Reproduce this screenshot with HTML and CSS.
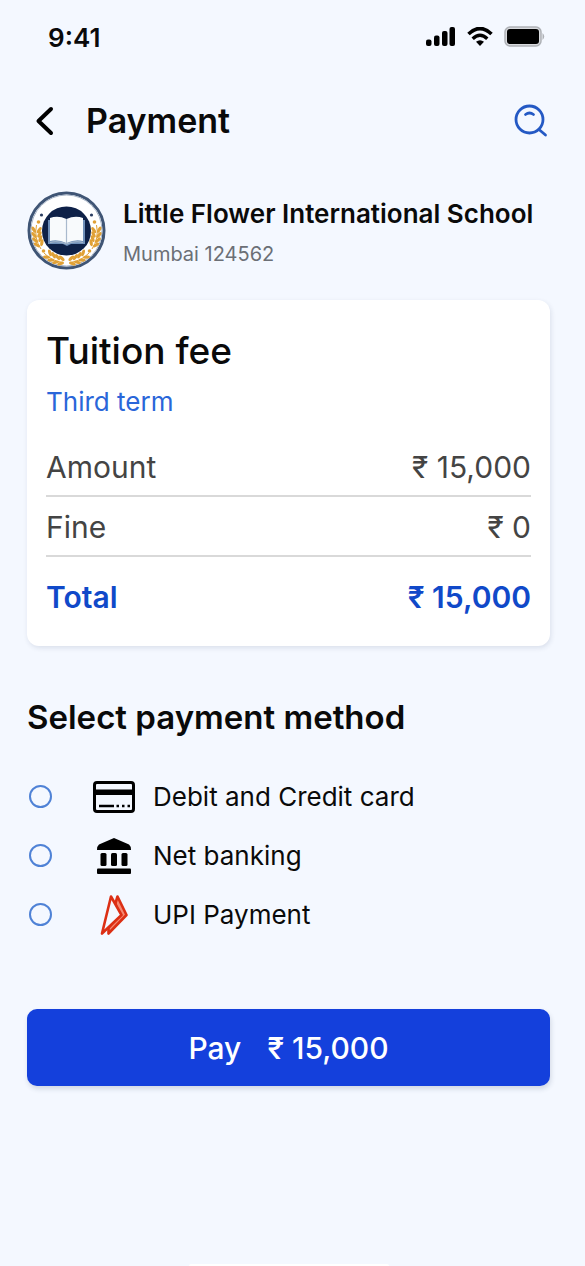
FILE: index.html
```html
<!DOCTYPE html>
<html lang="en">
<head>
<meta charset="utf-8">
<meta name="viewport" content="width=device-width, initial-scale=1">
<title>Payment</title>
<link rel="stylesheet" href="styles.css">
</head>
<body>
<div class="screen">
  <div class="status">
    <span class="time">9:41</span>
    <div class="indicators">
      <svg width="30" height="20" viewBox="0 0 30 20" aria-hidden="true">
        <rect x="0" y="12.500" width="5.500" height="6.500" rx="2"/><rect x="8" y="8.500" width="5.500" height="10.500" rx="2"/><rect x="16" y="4" width="5.500" height="15" rx="2"/><rect x="23.500" y="0" width="5.500" height="19" rx="2"/>
      </svg>
      <svg width="26" height="20" viewBox="0 0 26 20" aria-hidden="true">
        <path d="M1.500 7Q13-4 24.500 7" fill="none" stroke="#000" stroke-width="3.600"/>
        <path d="M5.700 11.800Q13 4.800 20.300 11.800" fill="none" stroke="#000" stroke-width="3.400"/>
        <path d="M9 14.800Q13 11.800 17 14.800L13 19Z"/>
      </svg>
      <svg width="42" height="22" viewBox="0 0 42 22" aria-hidden="true">
        <rect x="1" y="1" width="36" height="19" rx="5" fill="#d8dade" stroke="#aeb1b6" stroke-width="1.500"/>
        <rect x="3" y="3" width="32" height="15" rx="3"/>
        <path d="M38.500 7Q42 10.500 38.500 14Z" fill="#aeb1b6"/>
      </svg>
    </div>
  </div>

  <header class="header">
    <button class="icon-button" aria-label="Back">
      <svg width="20" height="30" viewBox="0 0 20 30" aria-hidden="true"><path d="M17 3L4.500 15L17 27" fill="none" stroke="#000" stroke-width="4" stroke-linecap="round" stroke-linejoin="round"/></svg>
    </button>
    <h1 class="title">Payment</h1>
    <button class="icon-button search" aria-label="Search">
      <svg width="34" height="34" viewBox="0 0 34 34" fill="none" stroke="#2459c4" stroke-width="2.800" stroke-linecap="round" aria-hidden="true"><circle cx="15.500" cy="15.500" r="13.500"/><path d="M25 25.500L31.500 31"/><path d="M11.500 10.500Q15.500 7.500 19.500 10.500"/></svg>
    </button>
  </header>

  <main>
    <section class="school">
      <svg class="crest" width="80" height="80" viewBox="0 0 80 80" aria-hidden="true">
        <defs>
          <g id="leaf" fill="#e0a136"><ellipse cx="-1" cy="-2.600" rx="3.500" ry="1.600" transform="rotate(32)"/><ellipse cx="-1" cy="2.600" rx="3.500" ry="1.600" transform="rotate(-32)"/></g>
          <g id="laurel">
            <path d="M36 71.500A31.700 31.700 0 0 1 17 62M14 58A31.700 31.700 0 0 1 9.500 34" fill="none" stroke="#e0a136" stroke-width="1"/>
            <use href="#leaf" transform="rotate(12 40 40) translate(40 70.500)"/>
            <use href="#leaf" transform="rotate(21 40 40) translate(40 70.500)"/>
            <use href="#leaf" transform="rotate(30 40 40) translate(40 70.500)"/>
            <use href="#leaf" transform="rotate(39 40 40) translate(40 70.500)"/>
            <use href="#leaf" transform="rotate(66 40 40) translate(40 70.500)"/>
            <use href="#leaf" transform="rotate(75 40 40) translate(40 70.500)"/>
            <use href="#leaf" transform="rotate(84 40 40) translate(40 70.500)"/>
            <use href="#leaf" transform="rotate(93 40 40) translate(40 70.500)"/>
            <circle cx="16.500" cy="60" r="1.800" fill="#e0a136"/>
            <circle cx="11.500" cy="31" r="1.800" fill="#e0a136"/>
            <circle cx="14.500" cy="24" r="1.600" fill="#2a3d61"/>
          </g>
        </defs>
        <circle cx="39.500" cy="39.500" r="37.500" fill="#fff" stroke="#3f5575" stroke-width="3"/>
        <circle cx="39.500" cy="39.500" r="35.500" fill="none" stroke="#a9b6c8" stroke-width="1"/>
        <use href="#laurel"/>
        <use href="#laurel" transform="translate(79 0) scale(-1 1)"/>
        <circle cx="39.500" cy="40" r="24.500" fill="#0e2148"/>
        <path d="M21 29H58V53H44L40 55L36 53H21Z" fill="#6f8fb8"/>
        <path d="M23 27Q31 24 39.500 28Q48 24 56 27V50Q48 48 39.500 52Q31 48 23 50Z" fill="#f8fafc"/>
        <path d="M39.500 28V52M23 51.500Q31 49.500 39.500 53Q48 49.500 56 51.500" fill="none" stroke="#a9b9cd" stroke-width="1.200"/>
      </svg>
      <div class="school-text">
        <h2 class="school-name">Little Flower International School</h2>
        <p class="school-place">Mumbai 124562</p>
      </div>
    </section>

    <section class="card">
      <h2 class="fee-title">Tuition fee</h2>
      <p class="term">Third term</p>
      <table class="fees">
        <tbody>
          <tr><th scope="row">Amount</th><td>₹ 15,000</td></tr>
          <tr><th scope="row">Fine</th><td>₹ 0</td></tr>
        </tbody>
        <tfoot>
          <tr><th scope="row">Total</th><td>₹ 15,000</td></tr>
        </tfoot>
      </table>
    </section>

    <form class="methods">
      <fieldset class="options">
        <legend class="legend">Select payment method</legend>
        <label class="option">
          <input class="radio" type="radio" name="method" value="card">
          <span class="option-icon"><svg width="42" height="32" viewBox="0 0 42 32" aria-hidden="true"><rect x="1.500" y="1.500" width="39" height="29" rx="2.500" fill="none" stroke="#000" stroke-width="3"/><path d="M2 8.500H40V14H2Z"/><path d="M6 25H21M23.500 25H26M29 25H31.500M34.500 25H37" stroke="#000" stroke-width="2.400"/></svg></span>
          <span>Debit and Credit card</span>
        </label>
        <label class="option">
          <input class="radio" type="radio" name="method" value="bank">
          <span class="option-icon"><svg width="34" height="36" viewBox="0 0 34 36" aria-hidden="true"><path d="M17 0L32 6.500Q34 8 34 12H0Q0 8 2 6.500Z"/><rect x="3.500" y="15" width="6" height="13" rx="1.500"/><rect x="14" y="15" width="6" height="13" rx="1.500"/><rect x="24.500" y="15" width="6" height="13" rx="1.500"/><rect x="0" y="30.500" width="34" height="5.500" rx="1"/></svg></span>
          <span>Net banking</span>
        </label>
        <label class="option">
          <input class="radio" type="radio" name="method" value="upi">
          <span class="option-icon"><svg width="28" height="40" viewBox="0 0 28 40" fill="none" stroke="#dc2f14" stroke-width="2.600" stroke-linejoin="round" aria-hidden="true"><path d="M17.500 1.500L26.500 20L8.500 38.500V33L18 22L15.500 8Z" fill="#f58a74"/><path d="M11 1.500L21.500 20L2 38.500Z" fill="#f5f8ff"/></svg></span>
          <span>UPI Payment</span>
        </label>
      </fieldset>
      <button class="pay" type="button"><span>Pay</span><span>₹ 15,000</span></button>
    </form>
  </main>
  <div class="home-bar"></div>
</div>
</body>
</html>
```
FILE: styles.css
```css
* {
  box-sizing: border-box;
}

body {
  margin: 0;
  background: #f4f8ff;
  color: #0a0a0a;
  font-family: Inter, "Noto Sans", sans-serif;
}

h1, h2, p {
  margin: 0;
  font-weight: 500;
}

button {
  font: inherit;
  border: 0;
  cursor: pointer;
}

svg {
  display: block;
  flex: none;
}

.screen {
  display: flex;
  flex-direction: column;
  min-height: 100vh;
  padding: 21px 35px 0 27px;
}

.status {
  display: flex;
  align-items: center;
  justify-content: space-between;
  height: 32px;
  padding: 0 4px 0 21px;
}

.time {
  font-size: 26px;
  font-weight: 600;
}

.indicators {
  display: flex;
  align-items: center;
  gap: 11px;
}

.header {
  display: flex;
  align-items: center;
  height: 48px;
  margin-top: 44px;
  padding: 0 2px 0 7px;
}

.icon-button {
  padding: 0;
  background: none;
}

.title {
  flex: 1;
  margin-left: 32px;
  font-size: 34px;
  line-height: 48px;
  font-weight: 600;
}

.school {
  display: flex;
  align-items: center;
  gap: 16px;
  margin-top: 43px;
}

.school-text {
  padding-top: 6px;
  white-space: nowrap;
}

.school-name {
  font-size: 26px;
  line-height: 40px;
  font-weight: 600;
}

.school-place {
  color: #6b6f76;
  font-size: 20px;
  line-height: 40px;
  font-weight: 400;
}

.card {
  margin-top: 26px;
  padding: 24px 19px 10px;
  border-radius: 12px;
  background: #fff;
  box-shadow: 1px 2px 5px rgba(30, 50, 90, 0.12);
}

.fee-title {
  font-size: 37px;
  line-height: 54px;
}

.term {
  color: #2a66d9;
  font-size: 26px;
  line-height: 48px;
  font-weight: 400;
}

.fees {
  width: 100%;
  margin-top: 10px;
  border-collapse: collapse;
  color: #444;
  font-size: 30px;
  line-height: 40px;
}

.fees th,
.fees td {
  height: 60px;
  padding: 2px 0 0;
  border-bottom: 2px solid #d9d9d9;
  font-weight: 400;
  text-align: left;
}

.fees td {
  text-align: right;
}

.fees tfoot th,
.fees tfoot td {
  height: 80px;
  padding: 0;
  border-bottom: 0;
  color: #1049c9;
  font-weight: 600;
}

.methods {
  margin-top: 47px;
}

.options {
  margin: 0;
  padding: 0;
  border: 0;
}

.legend {
  margin-bottom: 26px;
  padding: 0;
  font-size: 33px;
  line-height: 48px;
  font-weight: 600;
}

.option {
  display: flex;
  align-items: center;
  height: 59px;
  font-size: 26px;
}

.radio {
  appearance: none;
  width: 23px;
  height: 23px;
  margin: 0 35px 0 2px;
  border: 2px solid #4f82d6;
  border-radius: 50%;
}

.radio:checked {
  background: #1440dc;
}

.option-icon {
  display: flex;
  justify-content: center;
  width: 54px;
  margin-right: 12px;
}

.pay {
  display: flex;
  align-items: center;
  justify-content: center;
  gap: 26px;
  width: 100%;
  height: 77px;
  margin-top: 65px;
  border-radius: 10px;
  background: #1440dc;
  box-shadow: 1px 3px 5px rgba(30, 50, 90, 0.16);
  color: #fff;
  font-size: 30px;
  font-weight: 500;
}

.home-bar {
  align-self: center;
  width: 200px;
  height: 2px;
  margin-top: auto;
  border-radius: 2px 2px 0 0;
  background: #fff;
}
```
